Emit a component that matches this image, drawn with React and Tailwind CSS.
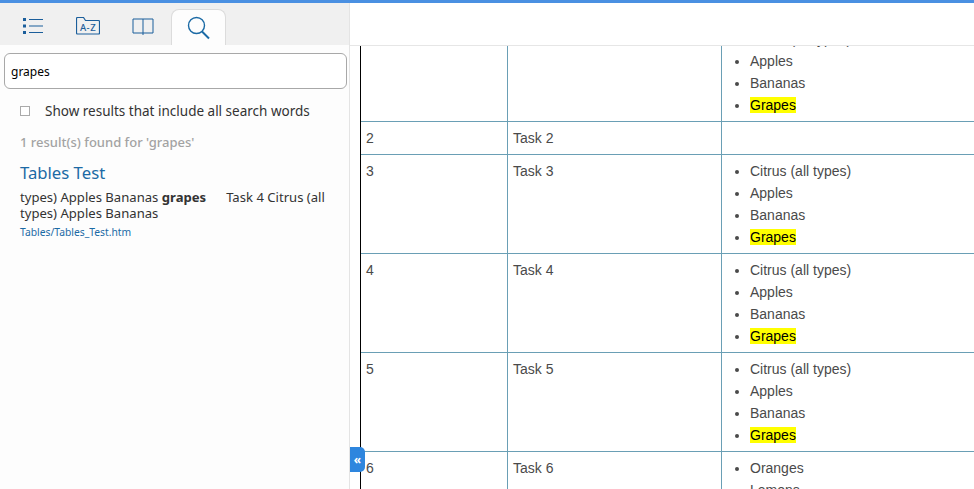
import React from "react";

const List = ({ items }) => (
  <ul className="list-disc pl-[23px]">
    {items.map((t) => (
      <li key={t} className="h-[22px] leading-[22px] marker:text-[#4a4a4a]">
        {t === "Grapes" ? <span className="bg-[#ffff00] text-black">{t}</span> : t}
      </li>
    ))}
  </ul>
);

const fruit = ["Citrus (all types)", "Apples", "Bananas", "Grapes"];

const Row = ({ num, task, items }) => (
  <div className="flex h-[99px] border-b border-[#6a9fb5]">
    <div className="w-[147px] shrink-0 border-r border-[#6a9fb5] pl-[5px] pt-[6px]">{num}</div>
    <div className="w-[214px] shrink-0 border-r border-[#6a9fb5] pl-[5px] pt-[6px]">{task}</div>
    <div className="pl-[5px] pt-[5px]">
      <List items={items} />
    </div>
  </div>
);

export default function App() {
  return (
    <div className="h-[489px] w-[974px] overflow-hidden bg-white">
      <div className="h-[3px] bg-[#4a90e2]" />
      <div className="flex h-[486px]">
        <aside className="relative w-[350px] shrink-0 border-r border-[#e4e4e4] bg-[#fdfdfd] font-['Noto_Sans',sans-serif] text-[13.5px] text-[#333]">
          <div className="flex h-[42px] items-end bg-[#f0f0f0] pl-[10px]">
            <button className="flex h-[36px] w-[46px] items-center justify-center pb-[2px]">
              <svg width="20" height="16" viewBox="0 0 20 16" fill="none" stroke="#1b5e9b" strokeWidth="1">
                <path d="M0 0h3v3H0zM0 6.5h3v3H0zM0 13h3v3H0z" fill="#1b5e9b" stroke="none" />
                <path d="M6 1.5h14M6 8h14M6 14.5h14" />
              </svg>
            </button>
            <button className="ml-[9px] flex h-[36px] w-[46px] items-center justify-center pb-[2px]">
              <svg width="24" height="18" viewBox="0 0 24 18" fill="none" stroke="#1b5e9b" strokeWidth="1.2">
                <path d="M1.5 17a1 1 0 0 1-1-1V1.5a1 1 0 0 1 1-1h6l2 3h13a1 1 0 0 1 1 1v11.5a1 1 0 0 1-1 1z" />
                <text x="12" y="13.5" textAnchor="middle" fontSize="9.5" fontWeight="500" letterSpacing="0.5" fill="#1b5e9b" stroke="none" fontFamily="Noto Sans, sans-serif">A-Z</text>
              </svg>
            </button>
            <button className="ml-[9px] flex h-[36px] w-[46px] items-center justify-center pb-[2px]">
              <svg width="22" height="17" viewBox="0 0 22 17" fill="none" stroke="#1b5e9b" strokeWidth="1">
                <path d="M11 1H1v14h10m0-14h10v14H11m0-14v16" />
              </svg>
            </button>
            <button className="ml-[5px] flex h-[36px] w-[55px] items-center justify-center rounded-t-[8px] border border-b-0 border-[#dcdcdc] bg-[#fdfdfd]">
              <svg width="23" height="24" viewBox="0 0 23 24" fill="none" stroke="#1b6aa5" strokeWidth="1.4">
                <circle cx="9.5" cy="9.5" r="8" />
                <path d="M15 15.5l7 7" strokeWidth="2" />
              </svg>
            </button>
          </div>
          <div className="px-[4px] pt-[8px]">
            <input
              readOnly
              value="grapes"
              className="block h-[36px] w-[343px] rounded-[6px] border border-[#a8a8a8] bg-white pl-[6px] text-[12px] text-black outline-none"
            />
          </div>
          <label className="mt-[13px] flex h-[18px] items-center pl-[20px]">
            <span className="h-[10px] w-[10px] border border-[#aaa] bg-white" />
            <span className="ml-[15px]">Show results that include all search words</span>
          </label>
          <div className="pl-[20px] pt-[13px] text-[13px] font-medium text-[#a3a3a3]">1 result(s) found for 'grapes'</div>
          <div className="pl-[20px] pr-[10px] pt-[8px]">
            <div className="text-[16.7px] leading-[24px] text-[#1b6aa5]">Tables Test</div>
            <p className="mt-[4px] text-[13.1px] leading-[16px]">
              types) Apples Bananas <b>grapes</b>
              <span className="ml-[20px]">Task 4 Citrus (all types) Apples Bananas</span>
            </p>
            <div className="mt-[4px] text-[10.3px] leading-[14px] text-[#1b6aa5]">Tables/Tables_Test.htm</div>
          </div>
          <button className="absolute left-[350px] top-[444px] z-10 flex h-[25px] w-[15px] items-center justify-center rounded-r-[5px] bg-[#2e86de] text-[12px] font-bold leading-none text-white">
            «
          </button>
        </aside>
        <main className="flex min-w-0 flex-1 flex-col">
          <div className="h-[43px] shrink-0 border-b border-[#e6e6e6] bg-white" />
          <div className="ml-[10px] flex-1 overflow-hidden border-l border-black font-['Liberation_Sans',sans-serif] text-[14px] text-[#4a4a4a]">
            <div className="flex h-[76px] border-b border-[#6a9fb5]">
              <div className="w-[147px] shrink-0 border-r border-[#6a9fb5]" />
              <div className="w-[214px] shrink-0 border-r border-[#6a9fb5]" />
              <div className="-mt-[18px] pl-[5px]">
                <List items={fruit} />
              </div>
            </div>
            <div className="flex h-[33px] border-b border-[#6a9fb5]">
              <div className="w-[147px] shrink-0 border-r border-[#6a9fb5] pl-[5px] pt-[6px]">2</div>
              <div className="w-[214px] shrink-0 border-r border-[#6a9fb5] pl-[5px] pt-[6px]">Task 2</div>
              <div />
            </div>
            <Row num="3" task="Task 3" items={fruit} />
            <Row num="4" task="Task 4" items={fruit} />
            <Row num="5" task="Task 5" items={fruit} />
            <Row num="6" task="Task 6" items={["Oranges", "Lemons"]} />
          </div>
        </main>
      </div>
    </div>
  );
}
